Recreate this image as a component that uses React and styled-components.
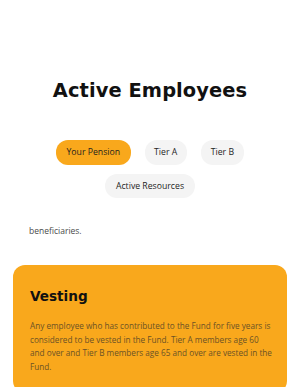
import React, { useState } from 'react';
import styled, { createGlobalStyle } from 'styled-components';

const GlobalStyle = createGlobalStyle`
  html, body {
    margin: 0;
    padding: 0;
    background: #ffffff;
  }
  body {
    font-family: "Open Sans", "Liberation Sans", sans-serif;
    overflow: hidden;
  }
`;

const Page = styled.main`
  width: 300px;
  height: 387px;
  overflow: hidden;
  display: flex;
  flex-direction: column;
  align-items: center;
`;

const Title = styled.h1`
  margin: 79px 0 0;
  font-family: "DejaVu Sans", "Liberation Sans", sans-serif;
  font-weight: 700;
  font-size: 19.4px;
  line-height: 24px;
  color: #111111;
  letter-spacing: 0.1px;
`;

const Tabs = styled.nav`
  margin-top: 37px;
  width: 260px;
  display: flex;
  flex-wrap: wrap;
  justify-content: center;
  column-gap: 14px;
  row-gap: 9px;
`;

const Tab = styled.button`
  height: 24.5px;
  padding: 0 ${({ $pad }) => $pad || 10}px;
  border: none;
  border-radius: 12px;
  background: ${({ $active }) => ($active ? '#f9a81c' : '#f4f4f4')};
  color: #1e1e1e;
  font-family: "Open Sans", sans-serif;
  font-size: 8.7px;
  font-weight: 500;
  cursor: pointer;
`;

const Text = styled.p`
  align-self: stretch;
  margin: 26px 0 0;
  padding: 0 29px;
  font-size: 8.5px;
  line-height: 14px;
  color: #4a4a4a;
`;

const Card = styled.section`
  align-self: stretch;
  margin: 27px 13px 0;
  padding: 22px 13px 20px 17px;
  background: #f9a81c;
  border-radius: 12px;
`;

const CardTitle = styled.h2`
  margin: 0;
  font-family: "DejaVu Sans", "Liberation Sans", sans-serif;
  font-weight: 700;
  font-size: 13.6px;
  line-height: 18px;
  color: #111111;
`;

const CardText = styled.p`
  margin: 14px 0 0;
  font-size: 8.2px;
  line-height: 13.6px;
  color: #6b5226;
`;

const tabs = [
  { label: 'Your Pension', pad: 10.5 },
  { label: 'Tier A', pad: 9.5 },
  { label: 'Tier B', pad: 10 },
  { label: 'Active Resources', pad: 10.5 },
];

export default function App() {
  const [active, setActive] = useState(0);
  return (
    <>
      <GlobalStyle />
      <Page>
        <Title>Active Employees</Title>
        <Tabs>
          {tabs.map((t, i) => (
            <Tab
              key={t.label}
              $pad={t.pad}
              $active={i === active}
              onClick={() => setActive(i)}
            >
              {t.label}
            </Tab>
          ))}
        </Tabs>
        <Text>beneficiaries.</Text>
        <Card>
          <CardTitle>Vesting</CardTitle>
          <CardText>
            Any employee who has contributed to the Fund for five years is
            considered to be vested in the Fund. Tier A members age 60 and over
            and Tier B members age 65 and over are vested in the Fund.
          </CardText>
        </Card>
      </Page>
    </>
  );
}
